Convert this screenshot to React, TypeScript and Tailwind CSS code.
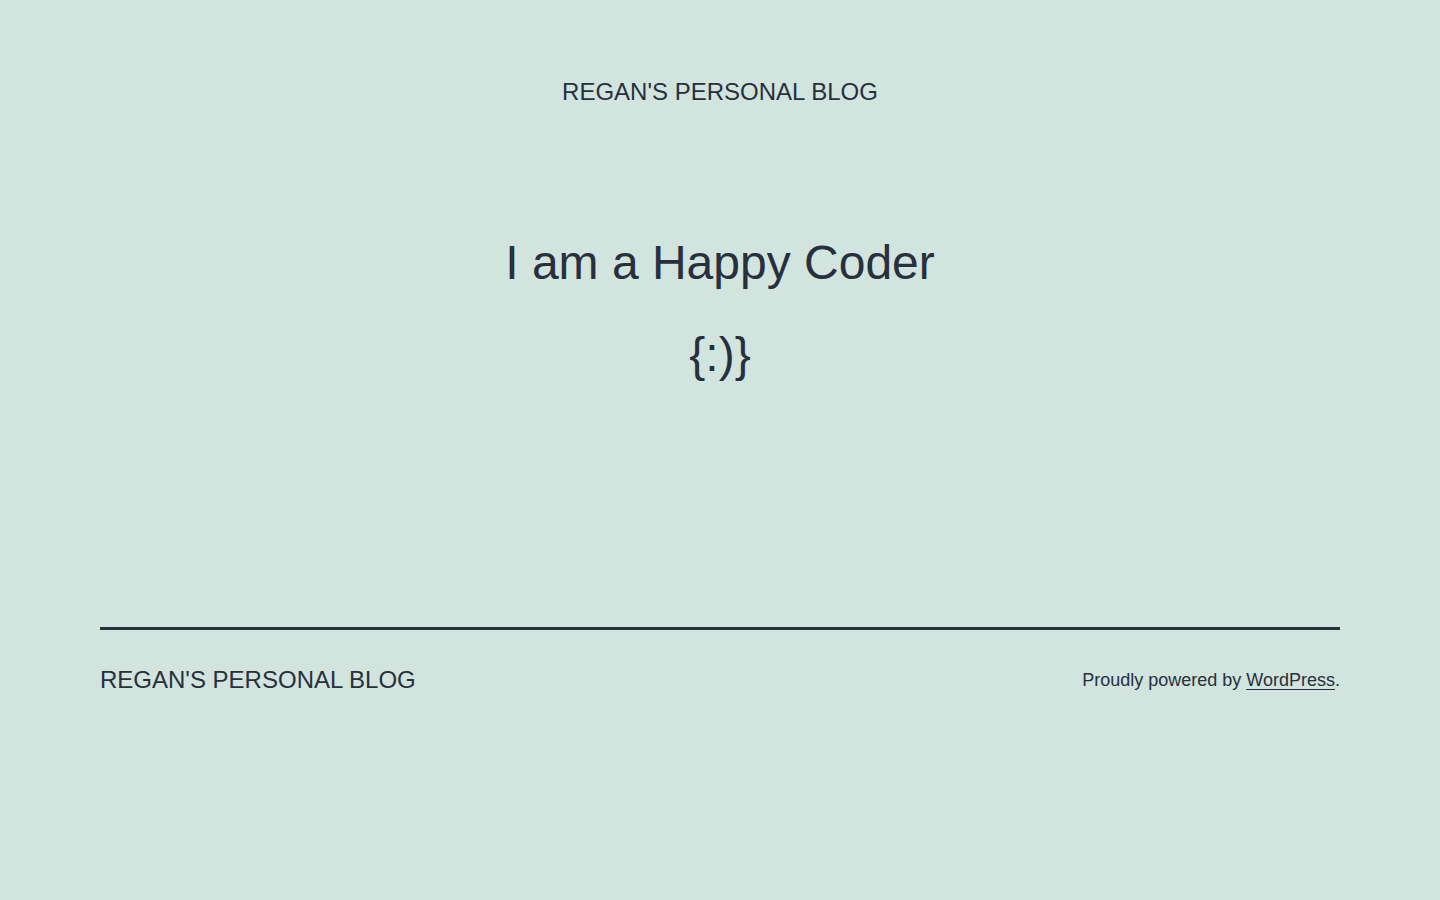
const siteName = "REGAN'S PERSONAL BLOG";

const App = () => {
    return (
        <div
            className="min-h-screen bg-[#d1e4dd] text-[#28303d]"
            style={{ fontFamily: '"Liberation Sans", Arial, sans-serif' }}
        >
            <header className="pt-[77px] flex justify-center">
                <p className="text-[24px] leading-[30px]">{siteName}</p>
            </header>
            <main className="mt-[126px] flex flex-col items-center gap-[32px]">
                <h1 className="text-[48px] leading-[60px] font-normal">I am a Happy Coder</h1>
                <p className="text-[48px] leading-[60px]">{"{:)}"}</p>
            </main>
            <footer className="mt-[242px] px-[100px]">
                <div className="border-t-[3px] border-[#28303d] pt-[35px] flex items-center justify-between">
                    <p className="text-[24px] leading-[30px]">{siteName}</p>
                    <p className="text-[18px] leading-[27px]">
                        Proudly powered by{" "}
                        <a href="#" className="underline underline-offset-[3px] decoration-1">
                            WordPress
                        </a>
                        .
                    </p>
                </div>
            </footer>
        </div>
    );
};

export default App;
